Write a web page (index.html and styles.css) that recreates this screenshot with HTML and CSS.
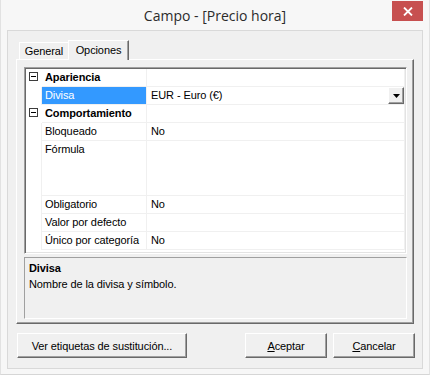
FILE: index.html
```html
<!DOCTYPE html>
<html lang="es">
<head>
  <meta charset="UTF-8">
  <title>Campo - [Precio hora]</title>
  <link rel="stylesheet" href="styles.css">
</head>
<body>
  <div class="window">
    <div class="titlebar">
      <span class="title">Campo - [Precio hora]</span>
      <button class="close" type="button">
        <svg width="10" height="9" viewBox="0 0 10 9"><path d="M1 0.5 L9 8.5 M9 0.5 L1 8.5" stroke="#fff" stroke-width="1.8" fill="none"/></svg>
      </button>
    </div>

    <div class="client">
      <div class="tabs">
        <div class="tab">General</div>
        <div class="tab active">Opciones</div>
      </div>

      <div class="tabpage">
        <div class="propgrid">
          <div class="row category">
            <div class="gutter"><span class="toggle"></span></div>
            <div class="name">Apariencia</div>
            <div class="value"></div>
          </div>
          <div class="row">
            <div class="gutter"></div>
            <div class="name selected">Divisa</div>
            <div class="value">
              <span>EUR - Euro (€)</span>
              <span class="dropdown">
                <svg width="7" height="4" viewBox="0 0 7 4"><path d="M0 0 H7 L3.5 4 Z" fill="#000"/></svg>
              </span>
            </div>
          </div>
          <div class="row category">
            <div class="gutter"><span class="toggle"></span></div>
            <div class="name">Comportamiento</div>
            <div class="value"></div>
          </div>
          <div class="row">
            <div class="gutter"></div>
            <div class="name">Bloqueado</div>
            <div class="value">No</div>
          </div>
          <div class="row tall">
            <div class="gutter"></div>
            <div class="name">Fórmula</div>
            <div class="value"></div>
          </div>
          <div class="row">
            <div class="gutter"></div>
            <div class="name">Obligatorio</div>
            <div class="value">No</div>
          </div>
          <div class="row">
            <div class="gutter"></div>
            <div class="name">Valor por defecto</div>
            <div class="value"></div>
          </div>
          <div class="row">
            <div class="gutter"></div>
            <div class="name">Único por categoría</div>
            <div class="value">No</div>
          </div>
        </div>

        <div class="desc">
          <div class="desc-title">Divisa</div>
          <div>Nombre de la divisa y símbolo.</div>
        </div>
      </div>

      <div class="actions">
        <button class="btn btn-wide" type="button">Ver etiquetas de sustitución...</button>
        <span class="spacer"></span>
        <button class="btn" type="button"><u>A</u>ceptar</button>
        <button class="btn" type="button"><u>C</u>ancelar</button>
      </div>
    </div>
  </div>
</body>
</html>
```

FILE: styles.css
```css
* {
  margin: 0;
  padding: 0;
  box-sizing: border-box;
}
body {
  width: 430px;
  height: 375px;
  overflow: hidden;
  background-color: #f7f7f7;
  font-family: "Liberation Sans", Arial, sans-serif;
  font-size: 11px;
  letter-spacing: -0.1px;
  color: #000;
}
.window {
  height: 375px;
  padding: 0 7px;
  border-left: 1px solid #e2e2e2;
  border-right: 1px solid #e2e2e2;
  border-bottom: 1px solid #d6d6d6;
}

/* barra de título */
.titlebar {
  position: relative;
  height: 30px;
  padding-top: 1px;
  text-align: center;
  font-family: "Open Sans", "Liberation Sans", sans-serif;
  font-size: 14px;
  letter-spacing: 0;
  line-height: 29px;
  color: #2b2b2b;
}
.close {
  position: absolute;
  top: 1px;
  right: -1px;
  width: 31px;
  height: 20px;
  border: none;
  background-color: #c75050;
  display: flex;
  align-items: center;
  justify-content: center;
}

/* área cliente */
.client {
  height: 339px;
  margin-left: -1px;
  margin-right: -1px;
  border: 1px solid #d9d9d9;
  background-color: #f0f0f0;
  padding: 9px 8px 10px 8px;
  display: flex;
  flex-direction: column;
}

/* pestañas */
.tabs {
  display: flex;
  align-items: flex-end;
  height: 19px;
  padding-left: 3px;
}
.tab {
  width: 49px;
  height: 17px;
  line-height: 16px;
  text-align: center;
  border-top: 1px solid #fff;
  border-left: 1px solid #fff;
  background-color: #f0f0f0;
}
.tab.active {
  position: relative;
  z-index: 1;
  width: 61px;
  height: 20px;
  margin-bottom: -1px;
  padding-top: 1px;
  border-right: 1px solid #696969;
  box-shadow: inset -1px 0 #a0a0a0;
}
.tabpage {
  height: 265px;
  padding: 7px 6px 2px 7px;
  border-top: 1px solid #fff;
  border-left: 1px solid #fff;
  border-right: 1px solid #696969;
  border-bottom: 1px solid #696969;
  box-shadow: inset -1px -1px #a0a0a0;
  display: flex;
  flex-direction: column;
  gap: 3px;
}

/* cuadrícula de propiedades */
.propgrid {
  height: 187px;
  padding: 1px;
  border-top: 1px solid #a0a0a0;
  border-left: 1px solid #a0a0a0;
  border-right: 1px solid #fff;
  border-bottom: 1px solid #fff;
  box-shadow: inset 1px 1px #696969, inset -1px -1px #e3e3e3;
  background-color: #fff;
}
.row {
  display: grid;
  grid-template-columns: 16px 105px 1fr;
  height: 18px;
  line-height: 17px;
}
.row.tall {
  height: 55px;
}
.gutter {
  border-right: 1px solid #f0f0f0;
  padding: 3px 0 0 3px;
}
.category .gutter {
  border-right-color: #fff;
}
.name, .value {
  border-right: 1px solid #f0f0f0;
  border-bottom: 1px solid #f0f0f0;
  white-space: nowrap;
}
.name {
  padding-left: 3px;
}
.value {
  padding-left: 4px;
  display: flex;
}
.category .name {
  font-weight: bold;
}
.name.selected {
  background-color: #3399ff;
  color: #fff;
}
.toggle {
  display: flex;
  align-items: center;
  justify-content: center;
  width: 9px;
  height: 9px;
  border: 1px solid #3c3c3c;
  background-color: #fff;
}
.toggle::after {
  content: "";
  width: 5px;
  height: 1px;
  background-color: #000;
}
.dropdown {
  margin-left: auto;
  width: 16px;
  height: 17px;
  background-color: #f0f0f0;
  border-top: 1px solid #fff;
  border-left: 1px solid #fff;
  border-right: 1px solid #696969;
  border-bottom: 1px solid #696969;
  box-shadow: inset -1px -1px #a0a0a0;
  display: flex;
  align-items: center;
  justify-content: center;
}

/* panel de descripción */
.desc {
  height: 62px;
  padding: 2px 4px;
  line-height: 16px;
  border-top: 1px solid #a0a0a0;
  border-left: 1px solid #a0a0a0;
  border-right: 1px solid #fff;
  border-bottom: 1px solid #fff;
}
.desc-title {
  font-weight: bold;
}

/* botones */
.actions {
  display: flex;
  gap: 6px;
  margin: 9px -1px 0 1px;
}
.spacer {
  flex: 1;
}
.btn {
  width: 82px;
  height: 25px;
  font-family: inherit;
  font-size: 11px;
  letter-spacing: -0.1px;
  color: #000;
  background-color: #f0f0f0;
  border-top: 1px solid #fff;
  border-left: 1px solid #fff;
  border-right: 1px solid #696969;
  border-bottom: 1px solid #696969;
  box-shadow: inset -1px -1px #a0a0a0;
}
.btn-wide {
  width: 170px;
}
```
